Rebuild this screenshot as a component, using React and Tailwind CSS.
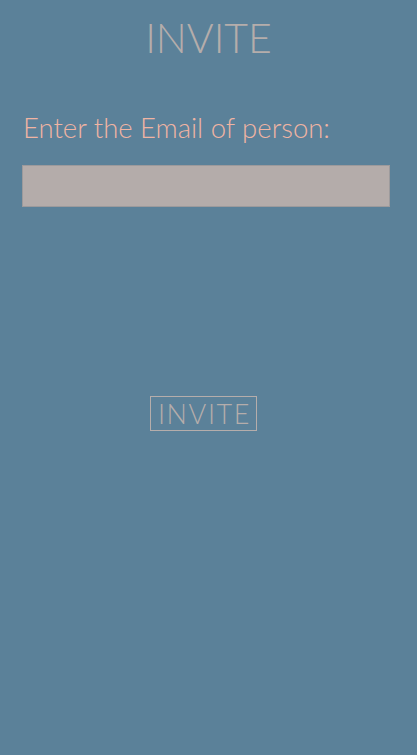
export default function App() {
  return (
    <div
      className="flex flex-col w-[417px] h-[755px] bg-[#5b8199] text-[#b5adab]"
      style={{ fontFamily: "'Gill Sans', Lato, 'Open Sans', sans-serif" }}
    >
      <h1 className="text-center text-[41px] font-light leading-none mt-[17px]">
        INVITE
      </h1>
      <p className="ml-[23px] mt-[56px] text-[27.5px] font-light leading-none text-[#f0b4a3]">
        Enter the Email of person:
      </p>
      <input
        type="email"
        className="ml-[22px] mr-[27px] mt-[23px] h-[42px] bg-[#b4acaa] border border-[#9c9a9c] outline-none"
      />
      <div className="flex justify-center pr-[10px] mt-[189px]">
        <button className="border border-[#b5adab] pl-[7px] pr-[5px] h-[35px] text-[27px] font-light leading-none tracking-[1.6px] text-[#b5adab]">
          INVITE
        </button>
      </div>
    </div>
  );
}
